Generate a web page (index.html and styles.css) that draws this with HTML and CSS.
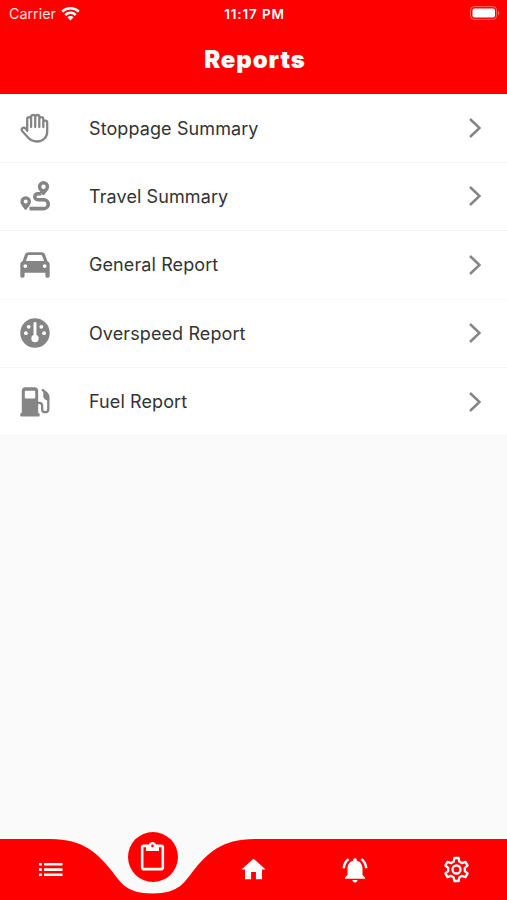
FILE: index.html
```html
<!DOCTYPE html>
<html lang="en">
  <head>
    <meta charset="UTF-8" />
    <meta name="viewport" content="width=device-width, initial-scale=1.0" />
    <title>Reports</title>
    <link rel="stylesheet" href="styles.css">
  </head>
  <body>
    <header class="header">
      <div class="status">
        <div class="carrier">
          <span>Carrier</span>
          <svg width="19" height="14" viewBox="0 0 19 14" fill="none" stroke="#fff" stroke-width="2.5">
            <path d="M1.2 4.700a11.8 11.8 0 0 1 16.6 0" />
            <path d="M4.3 8a7.4 7.4 0 0 1 10.4 0" />
            <path d="M6.4 10.300a4.4 4.4 0 0 1 6.2 0L9.5 13.500z" fill="#fff" stroke="none" />
          </svg>
        </div>
        <span class="time">11:17 PM</span>
        <svg class="battery" width="30" height="14" viewBox="0 0 30 14">
          <rect x=".6" y=".6" width="26" height="12.8" rx="3.6" fill="none" stroke="#fff" stroke-opacity=".4" />
          <rect x="2.5" y="2.5" width="22.5" height="9" rx="2" fill="#fff" />
          <path d="M28 4.8c1.8.7 1.8 3.7 0 4.4z" fill="#fff" fill-opacity=".4" />
        </svg>
      </div>
      <h1>Reports</h1>
    </header>

    <main class="list">
      <div class="item">
        <svg class="icon" viewBox="0 0 30 30" fill="none" stroke="#858585" stroke-width="2.300" stroke-linejoin="round" stroke-linecap="round">
          <path d="M7.200 18V6c0-2.600 3.900-2.600 3.900 0V14 4c0-2.800 4.100-2.800 4.100 0v10V4c0-2.700 4.100-2.700 4.100 0V14 6c0-2.600 4-2.600 4 0V14 9.500c0-2.500 3.900-2.500 3.900 0v9c0 6-4.200 10-10.200 10-4.600 0-7.300-1.800-9.900-5l-4.700-5.300c-1.900-2.400 1-4.800 3.100-2.700l1.800 2" />
        </svg>
        <p>Stoppage Summary</p>
        <svg class="arrow" viewBox="0 0 12 20"><path d="M1 1l9.500 9L1 19" /></svg>
      </div>
      <div class="item">
        <svg class="icon" viewBox="0 0 30 30" fill="#858585">
          <path fill-rule="evenodd" d="M23.500 0a5.700 5.700 0 0 1 5.700 5.700c0 2.800-2.900 5.500-4.800 8-.5.600-1.400.600-1.900 0-1.900-2.500-4.700-5.200-4.700-8A5.700 5.700 0 0 1 23.500 0zm0 3.500a2.200 2.200 0 1 0 0 4.400 2.200 2.200 0 0 0 0-4.400z" />
          <path fill-rule="evenodd" d="M5.700 15.200a5.300 5.300 0 0 1 5.300 5.300c0 2.800-2.600 5.500-4.500 8-.4.600-1.200.600-1.700 0-1.900-2.500-4.400-5.200-4.400-8a5.300 5.300 0 0 1 5.300-5.300zm0 3.300a2 2 0 1 0 0 4 2 2 0 0 0 0-4z" />
          <path d="M21.500 12.700h-3.700a3 3 0 0 0 0 6h6a4.400 4.400 0 0 1 0 8.900H9.500" fill="none" stroke="#858585" stroke-width="3.600" />
        </svg>
        <p>Travel Summary</p>
        <svg class="arrow" viewBox="0 0 12 20"><path d="M1 1l9.500 9L1 19" /></svg>
      </div>
      <div class="item">
        <svg class="icon" viewBox="0 0 30 30" fill="#858585">
          <path fill-rule="evenodd" d="M8.500 2.200h13c2 0 3.200 1 3.800 2.800l2 6.100c1.600.8 2.400 2 2.400 3.900v10.700c0 2.800-4.300 2.800-4.300 0v-2.900H4.600v2.900c0 2.800-4.300 2.800-4.300 0V15c0-1.900.8-3.100 2.400-3.900l2-6.100c.6-1.800 1.800-2.800 3.800-2.800zm.9 2.900c-.9 0-1.500.4-1.800 1.300L6 11h18l-1.600-4.600c-.3-.9-.9-1.300-1.800-1.300zM5.300 14.200a1.900 1.900 0 1 0 0 3.800 1.900 1.900 0 0 0 0-3.800zm19.400 0a1.900 1.900 0 1 0 0 3.800 1.900 1.900 0 0 0 0-3.800z" />
        </svg>
        <p>General Report</p>
        <svg class="arrow" viewBox="0 0 12 20"><path d="M1 1l9.500 9L1 19" /></svg>
      </div>
      <div class="item">
        <svg class="icon" viewBox="0 0 30 30" fill="#fff">
          <circle cx="15" cy="15" r="14.700" fill="#858585" />
          <circle cx="8.700" cy="8.800" r="1.900" />
          <circle cx="21.300" cy="8.800" r="1.900" />
          <circle cx="5.900" cy="15.200" r="1.900" />
          <circle cx="24.100" cy="15.200" r="1.900" />
          <circle cx="15" cy="20.500" r="3.700" />
          <path d="M15 5.500v14" stroke="#fff" stroke-width="2.900" stroke-linecap="round" />
        </svg>
        <p>Overspeed Report</p>
        <svg class="arrow" viewBox="0 0 12 20"><path d="M1 1l9.500 9L1 19" /></svg>
      </div>
      <div class="item">
        <svg class="icon" viewBox="0 0 30 30" fill="#858585">
          <path fill-rule="evenodd" d="M5.200.3h9.600c2 0 3.400 1.400 3.400 3.400v22.200H1.800V3.700c0-2 1.400-3.400 3.400-3.400zm.5 3.400c-.6 0-.9.300-.9.900v6c0 .6.300.9.900.9h8.600c.6 0 .9-.3.900-.9v-6c0-.6-.3-.9-.9-.9z" />
          <rect x=".3" y="26" width="19.300" height="3.500" rx="1" />
          <path d="M18 15.800h1.400c1.700 0 2.700 1 2.700 2.700v3.700c0 4 6.200 4 6.200 0V9.500c0-1.200-.4-2-1.200-2.800L22 2.300" fill="none" stroke="#858585" stroke-width="2.300" />
          <path d="M23.300 4l5.900 5v4.500h-1.500c-2.500-.4-4.400-2-4.400-4.300z" />
        </svg>
        <p>Fuel Report</p>
        <svg class="arrow" viewBox="0 0 12 20"><path d="M1 1l9.500 9L1 19" /></svg>
      </div>
    </main>

    <nav class="navbar">
      <svg class="curve" viewBox="0 0 507 61">
        <path d="M0 0H50C84 0 98 15 111 31C120 42 125 54.500 152.500 54.500C180 54.500 185 42 194 31C207 15 221 0 255 0H507V61H0z" fill="#fe0000" />
      </svg>
      <a class="tab">
        <svg width="24" height="15" viewBox="0 0 24 15" fill="#fff">
          <path d="M5 1h18.500v2.600H5zM5 6.300h18.500v2.600H5zM5 11.500h18.500v2.600H5zM0 1h2.800v2.600H0zM0 6.300h2.800v2.600H0zM0 11.500h2.800v2.600H0z" />
        </svg>
      </a>
      <a class="tab active">
        <span class="circle">
          <svg width="31" height="31" viewBox="0 0 24 24" fill="#fff">
            <path d="M19 2h-4.180C14.400.84 13.300 0 12 0c-1.300 0-2.400.84-2.820 2H5c-1.100 0-2 .9-2 2v16c0 1.100.9 2 2 2h14c1.100 0 2-.9 2-2V4c0-1.100-.9-2-2-2zm-7 0c.55 0 1 .45 1 1s-.45 1-1 1-1-.45-1-1 .45-1 1-1zm7 18H5V4h2v3h10V4h2v16z" />
          </svg>
        </span>
      </a>
      <a class="tab">
        <svg width="29" height="29" viewBox="0 0 24 24" fill="#fff">
          <path d="M10 20v-6h4v6h5v-8h3L12 3 2 12h3v8z" />
        </svg>
      </a>
      <a class="tab">
        <svg width="30" height="30" viewBox="0 0 24 24" fill="#fff">
          <path d="M7.580 4.080L6.150 2.650C3.750 4.480 2.170 7.300 2.030 10.500h2c.15-2.650 1.510-4.970 3.550-6.420zm12.390 6.420h2c-.15-3.200-1.730-6.020-4.120-7.850l-1.420 1.430c2.020 1.450 3.390 3.770 3.540 6.420zM18 11c0-3.070-1.640-5.640-4.500-6.320V4c0-.83-.67-1.500-1.500-1.500s-1.500.67-1.500 1.500v.68C7.630 5.360 6 7.920 6 11v5l-2 2v1h16v-1l-2-2v-5zm-6 11c.14 0 .27-.01.400-.04.65-.14 1.180-.58 1.440-1.180.1-.24.150-.5.150-.78h-4c.01 1.100.9 2 2.010 2z" />
        </svg>
      </a>
      <a class="tab">
        <svg width="27" height="27" viewBox="0 0 27 27" fill="none" stroke="#fff" stroke-width="2.300" stroke-linejoin="round">
          <path d="M11.400 2h4.200l.7 3.600 2.700 1.600 3.500-1.300 2.100 3.700-2.800 2.300v3.200l2.800 2.300-2.100 3.700-3.500-1.300-2.700 1.600-.7 3.600h-4.200l-.7-3.600L8 19.800l-3.500 1.300-2.100-3.700 2.800-2.300v-3.200L2.400 9.600l2.100-3.700L8 7.200l2.700-1.600z" />
          <circle cx="13.500" cy="13.500" r="4" />
        </svg>
      </a>
    </nav>
  </body>
</html>
```

FILE: styles.css
```css
* {
  box-sizing: border-box;
}
body {
  margin: 0;
  height: 100vh;
  display: flex;
  flex-direction: column;
  overflow: hidden;
  background-color: #fafafa;
  font-family: Inter, "Liberation Sans", sans-serif;
}
.header {
  height: 93.6px;
  background-color: #fe0000;
  color: white;
}
.status {
  height: 27px;
  padding: 0 7px 0 9px;
  display: grid;
  grid-template-columns: 1fr auto 1fr;
  align-items: center;
  font-size: 14.3px;
}
.carrier {
  display: flex;
  align-items: center;
  gap: 5px;
  color: #ffe0e0;
}
.time {
  font-size: 13.5px;
  font-weight: 600;
  letter-spacing: 0.85px;
}
.battery {
  justify-self: end;
  margin-bottom: 1px;
}
h1 {
  margin: 17px 0 0;
  padding-left: 3px;
  text-align: center;
  font-size: 24px;
  line-height: 32px;
  font-weight: 900;
  letter-spacing: 0.9px;
}
.list {
  flex: 1;
}
.item {
  height: 68.4px;
  padding: 0 26px 0 20px;
  display: flex;
  align-items: center;
  background-color: white;
  border-bottom: 1px solid #f5f5f5;
}
.item:first-child {
  height: 69.2px;
  padding-top: 1px;
}
.item p {
  flex: 1;
  margin: 0 0 0 39px;
  font-size: 18px;
  letter-spacing: 0.1px;
  color: #333;
}
.icon {
  width: 30px;
  height: 30px;
}
.arrow {
  width: 12px;
  height: 20px;
  fill: none;
  stroke: #858585;
  stroke-width: 2.5;
}
.navbar {
  position: relative;
  height: 61px;
  display: grid;
  grid-template-columns: repeat(5, 1fr);
}
/* red bar with the dip, sits behind the tabs */
.curve {
  position: absolute;
  width: 100%;
  height: 61px;
}
.tab {
  position: relative;
  display: flex;
  justify-content: center;
  align-items: center;
  padding-left: 1px;
}
.active {
  align-items: flex-start;
}
.circle {
  width: 50px;
  height: 50px;
  margin-top: -7px;
  border-radius: 50%;
  background-color: #fe0000;
  display: flex;
  justify-content: center;
  align-items: center;
}
```
